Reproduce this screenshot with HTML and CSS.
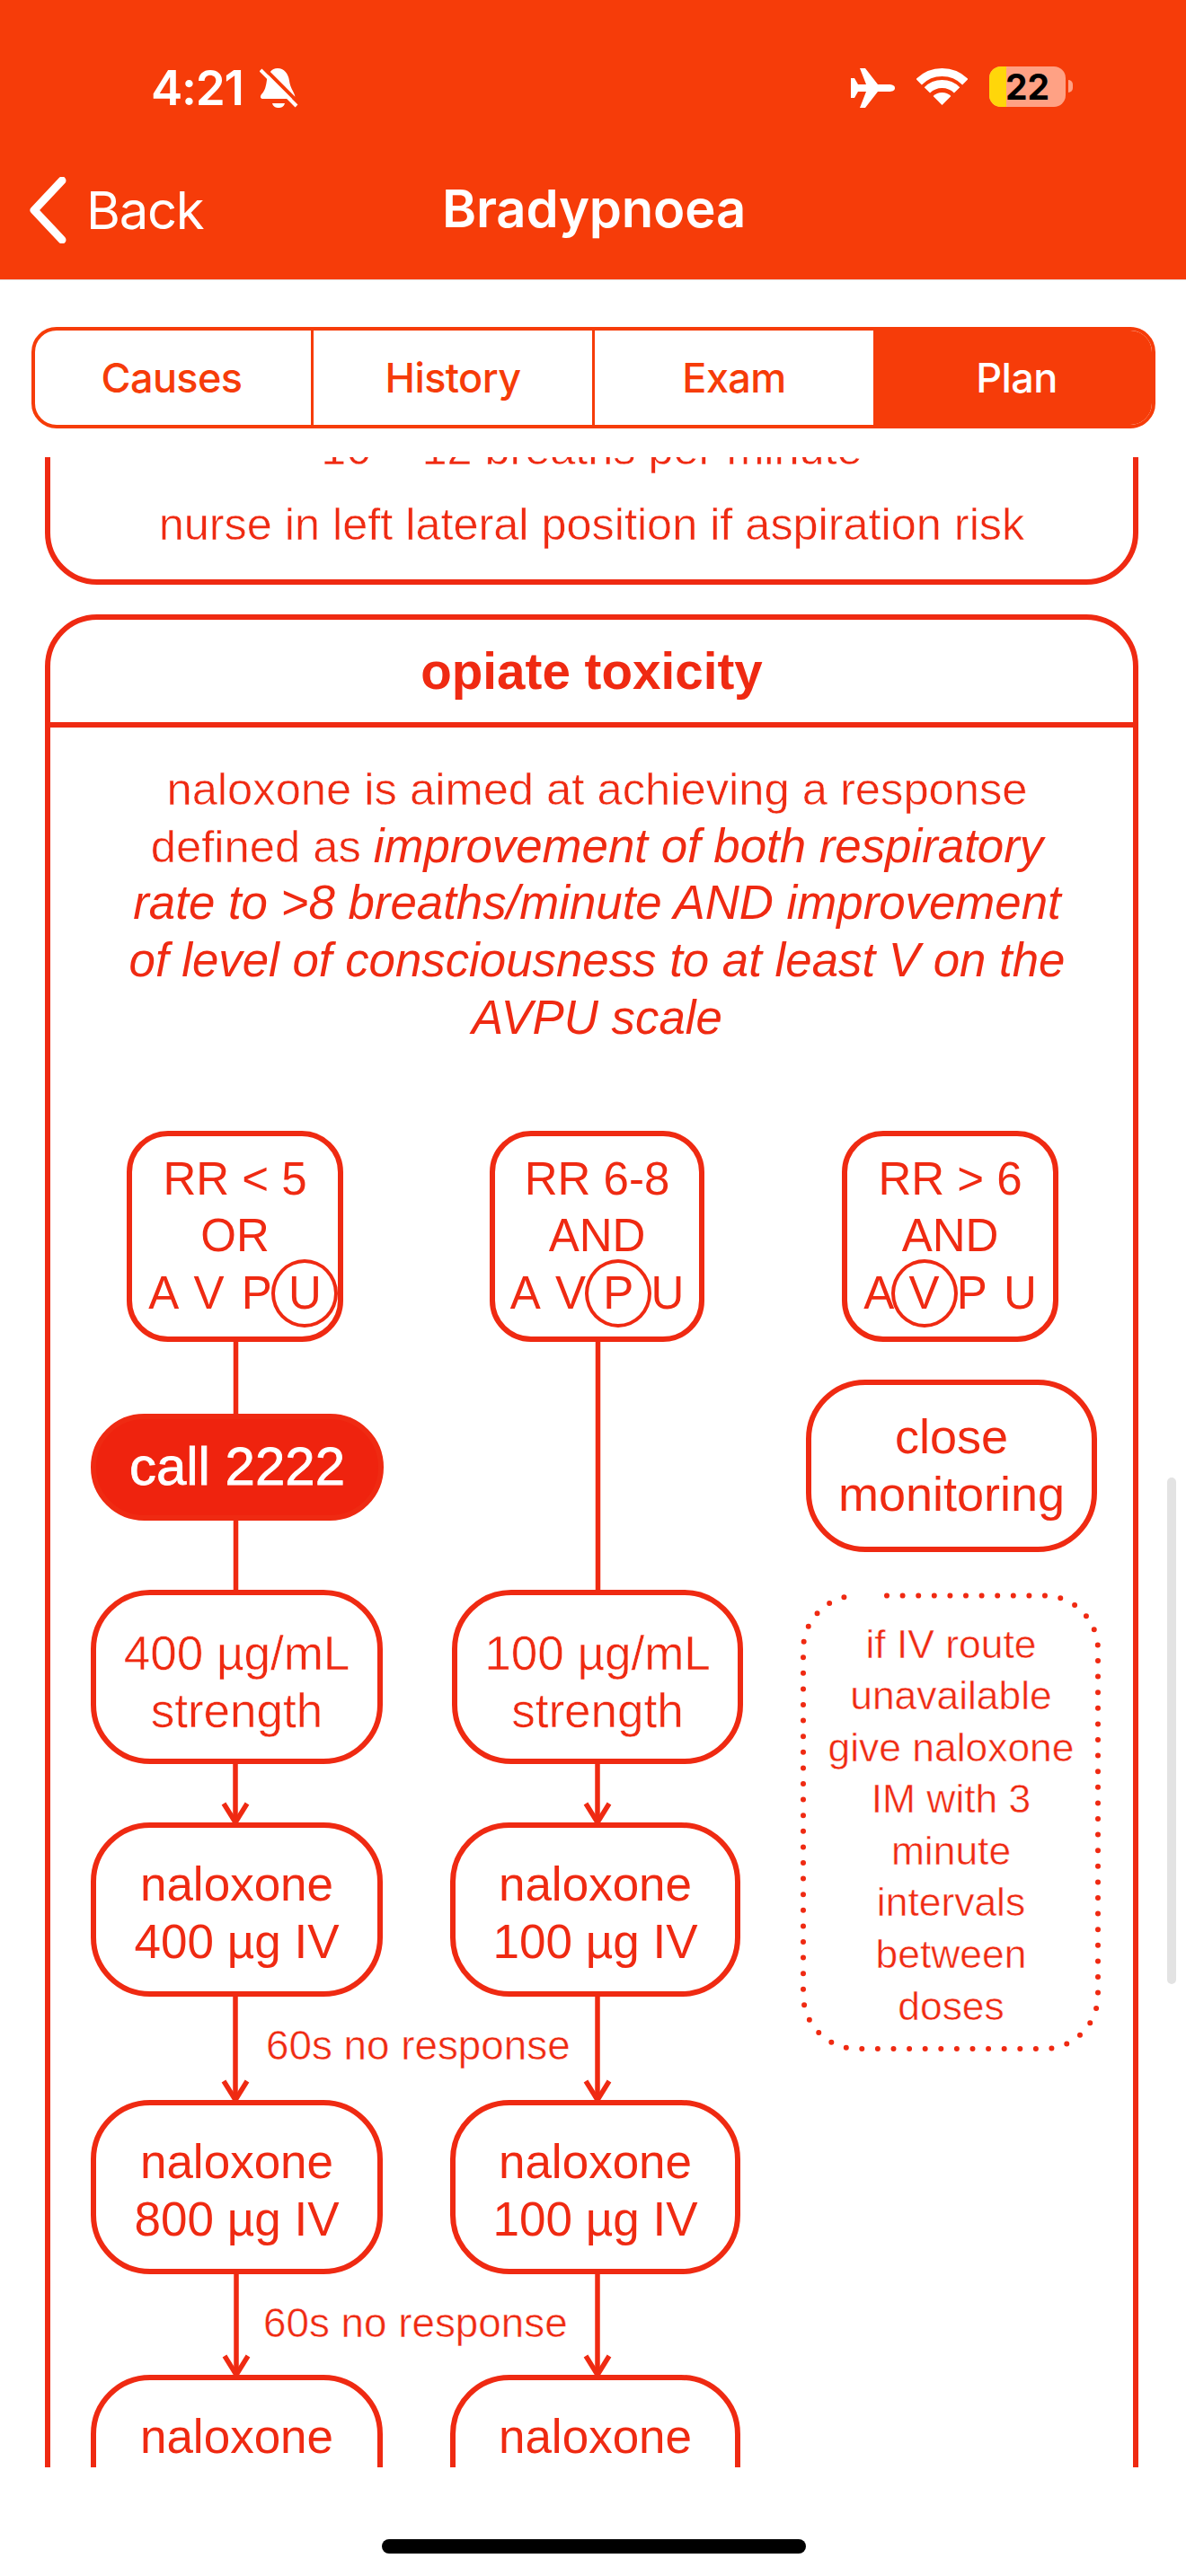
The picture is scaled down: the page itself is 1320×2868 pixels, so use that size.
FILE: index.html
```html
<!DOCTYPE html>
<html lang="en">
<head>
<meta charset="utf-8">
<title>Bradypnoea</title>
<link rel="stylesheet" href="styles.css">
</head>
<body>
<div class="app">
  <header class="header">
    <div class="status">
      <span class="time">4:21</span>
      <svg class="bell" viewBox="0 0 44 45"><path class="w" d="M20 1C27 1 32 7 33 15C34 23 38 27 39 31C40 34 38 35 36 35H4C1 35 0 33 2 30C6 26 7 21 8 14C9 7 13 1 20 1Z"/><path class="w" d="M14 40H28C27 44 24 45 21 45C18 45 15 44 14 40Z"/><path class="gap" d="M4 0L44 40"/><path class="slash" d="M1 3L41 43"/></svg>
      <span class="spacer"></span>
      <svg class="plane" viewBox="0 0 49 44"><path class="w" d="M42 18H30L16 0H10L17 18H8L4 11H0V33H4L8 26H17L10 44H16L30 26H42C46 26 49 25 49 22C49 19 46 18 42 18Z"/></svg>
      <svg class="wifi" viewBox="0 0 57 41"><path class="arc" d="M2.7 15.2A36.5 36.5 0 0 1 54.3 15.2"/><path class="arc" d="M11.9 24.4A23.5 23.5 0 0 1 45.1 24.4"/><path class="w" d="M28.5 41L18.6 31.1A14 14 0 0 1 38.4 31.1Z"/></svg>
      <span class="battery"><span class="charge"></span><span class="level">22</span></span>
      <span class="nub"></span>
    </div>
    <nav class="nav">
      <span class="back"><svg class="chev" viewBox="0 0 42 74"><path d="M37 4L6 37L37 70"/></svg>Back</span>
      <span class="title">Bradypnoea</span>
    </nav>
  </header>

  <div class="tabs">
    <span class="tab">Causes</span>
    <span class="tab">History</span>
    <span class="tab">Exam</span>
    <span class="tab active">Plan</span>
  </div>

  <main class="scroller">
    <section class="card card-prev">
      <p class="line">10 – 12 breaths per minute</p>
      <p class="line">nurse in left lateral position if aspiration risk</p>
    </section>

    <section class="card card-main">
      <h2 class="card-title">opiate toxicity</h2>
      <p class="intro"><span class="thin">naloxone is aimed at achieving a response<br>defined as </span><em>improvement of both respiratory<br>rate to &gt;8 breaths/minute AND improvement<br>of level of consciousness to at least V on the<br>AVPU scale</em></p>

      <div class="diagram">
        <svg class="wires" viewBox="0 0 1204 1700">
          <path d="M206.5 294V570"/>
          <path d="M609.5 294V570"/>
          <path d="M206 764V829M609 764V829"/>
          <path d="M206 1023V1138M609 1023V1138"/>
          <path d="M207 1332V1444M609 1332V1444"/>
          <path d="M193 808L206 829L219 808M596 808L609 829L622 808"/>
          <path d="M193 1117L206 1138L219 1117M596 1117L609 1138L622 1117"/>
          <path d="M194 1423L207 1444L220 1423M596 1423L609 1444L622 1423"/>
          <path class="dots" d="M931 576.5H1106A60 60 0 0 1 1166 636.5V1021A60 60 0 0 1 1106 1081H898A60 60 0 0 1 838 1021V636.5A60 60 0 0 1 898 576.5H899"/>
        </svg>

        <div class="node rr rr1"><span class="txt">RR &lt; 5<br>OR<br><span class="avpu">A V P <span class="ring">U</span></span></span></div>
        <div class="node rr rr2"><span class="txt">RR 6-8<br>AND<br><span class="avpu">A V <span class="ring">P</span> U</span></span></div>
        <div class="node rr rr3"><span class="txt">RR &gt; 6<br>AND<br><span class="avpu">A <span class="ring">V</span> P U</span></span></div>

        <div class="node call"><span class="txt">call 2222</span></div>
        <div class="node big close-mon"><span class="txt">close<br>monitoring</span></div>
        <div class="note thin">if IV route<br>unavailable<br>give naloxone<br>IM with 3<br>minute<br>intervals<br>between<br>doses</div>

        <div class="node big c1 r-str"><span class="txt thin">400 µg/mL<br>strength</span></div>
        <div class="node big c2s r-str"><span class="txt thin">100 µg/mL<br>strength</span></div>
        <div class="node big c1 r-a"><span class="txt">naloxone<br>400 µg IV</span></div>
        <div class="node big c2 r-a"><span class="txt">naloxone<br>100 µg IV</span></div>
        <div class="node big c1 r-b"><span class="txt">naloxone<br>800 µg IV</span></div>
        <div class="node big c2 r-b"><span class="txt">naloxone<br>100 µg IV</span></div>
        <div class="node big c1 r-c"><span class="txt">naloxone<br>&nbsp;</span></div>
        <div class="node big c2 r-c"><span class="txt">naloxone<br>&nbsp;</span></div>

        <span class="wait thin wait1">60s no response</span>
        <span class="wait thin wait2">60s no response</span>
      </div>
    </section>
  </main>

  <div class="scrollbar"></div>
  <div class="home"></div>
</div>
</body>
</html>
```

FILE: styles.css
```css
* { box-sizing: border-box; }
html, body { margin: 0; padding: 0; background: #fff; }
.app {
  position: relative;
  width: 1320px;
  height: 2868px;
  overflow: hidden;
  font-family: "Liberation Sans", Arial, sans-serif;
  color: #ef2a12;
  background: #fff;
}
/* white outline thins the glyphs to a light weight */
.thin { -webkit-text-stroke: 0.5px #fff; }

/* header */
.header {
  height: 312px;
  background: #f63c09;
  border-bottom: 1px solid #e6d9d5;
  color: #fff;
  font-family: Inter, "Liberation Sans", sans-serif;
}
.status {
  display: flex;
  align-items: flex-start;
  height: 180px;
  padding: 0 0 0 168px;
}
.time {
  margin-top: 66px;
  font-size: 53px;
  font-weight: 600;
  line-height: 64px;
  letter-spacing: -1.2px;
  width: 121px;
}
.bell { width: 44px; height: 45px; margin-top: 75px; }
.w { fill: #fff; }
.gap { stroke: #f63c09; stroke-width: 4; fill: none; }
.slash { stroke: #fff; stroke-width: 4; fill: none; }
.spacer { width: 614px; }
.plane { width: 49px; height: 44px; margin-top: 76px; }
.wifi { width: 57px; height: 41px; margin: 76px 0 0 24px; }
.arc { fill: none; stroke: #fff; stroke-width: 9; }
.battery {
  position: relative;
  display: flex;
  justify-content: center;
  width: 85px;
  height: 45px;
  margin: 74px 0 0 24px;
  border-radius: 13px;
  background: #ffa184;
  overflow: hidden;
}
.charge { position: absolute; left: 0; top: 0; bottom: 0; width: 19px; background: #ffd60a; }
.level {
  position: relative;
  color: #000;
  font-size: 39px;
  font-weight: 700;
  line-height: 45px;
}
.nub { width: 5px; height: 14px; margin: 89px 0 0 3px; border-radius: 0 6px 6px 0; background: #ffa184; }

.nav {
  position: relative;
  display: flex;
  justify-content: center;
  height: 100px;
  font-size: 58px;
  line-height: 70px;
}
.back {
  position: absolute;
  left: 32px;
  top: 17px;
  display: flex;
  align-items: center;
  gap: 22px;
  font-weight: 400;
  letter-spacing: -1.3px;
}
.chev { width: 42px; height: 74px; fill: none; stroke: #fff; stroke-width: 9; stroke-linecap: round; stroke-linejoin: round; }
.title { position: relative; left: 1px; margin-top: 17px; font-weight: 600; letter-spacing: -0.2px; }

/* tabs */
.tabs {
  display: grid;
  grid-template-columns: 310px 313px 313px 1fr;
  width: 1251px;
  height: 113px;
  margin: 52px 0 0 35px;
  border: 4px solid #f63c09;
  border-radius: 28px;
  overflow: hidden;
  font-family: Inter, "Liberation Sans", sans-serif;
  font-size: 45px;
  font-weight: 500;
  letter-spacing: -0.6px;
  color: #f63c09;
}
.tab {
  display: flex;
  align-items: center;
  justify-content: center;
  border-right: 3px solid #f63c09;
}
.tab:first-child { padding-right: 3px; }
.tab.active { border-right: 0; padding-left: 6px; background: #f63c09; color: #fff; }

/* scrolling content */
.scroller {
  height: 2238px;
  margin-top: 32px;
  padding: 0 53px 0 50px;
  overflow: hidden;
}
.card {
  border: 6px solid #ef2a12;
  background: #fff;
}
.card-prev {
  margin-top: -60px;
  padding: 3px 0 19px;
  border-radius: 0 0 58px 58px;
  text-align: center;
}
.line {
  margin: 0;
  font-size: 50.4px;
  line-height: 84px;
  white-space: nowrap;
  -webkit-text-stroke: 0.5px #fff;
}
.card-main {
  margin-top: 33px;
  border-radius: 58px 58px 0 0;
}
.card-title {
  margin: 0;
  height: 120px;
  border-bottom: 6px solid #ef2a12;
  font-size: 56.6px;
  font-weight: 700;
  line-height: 116px;
  text-align: center;
}
.intro {
  margin: 0;
  padding: 37px 38px 0 50px;
  font-size: 50.7px;
  line-height: 63.7px;
  text-align: center;
  white-space: nowrap;
}
.intro em { font-style: italic; font-size: 52.8px; line-height: 0; }

/* diagram: origin is x 56, y 1200 of the page */
.diagram {
  position: relative;
  width: 1204px;
  height: 1700px;
  margin-top: 34px;
}
.wires {
  position: absolute;
  left: 0;
  top: 0;
  width: 1204px;
  height: 1700px;
  fill: none;
  stroke: #ef2a12;
  stroke-width: 5.5;
}
.dots { stroke-width: 6; stroke-linecap: round; stroke-dasharray: 0 17.6; }
.node {
  position: absolute;
  display: flex;
  align-items: center;
  justify-content: center;
  border: 6px solid #ef2a12;
  background: #fff;
  font-size: 53px;
  line-height: 63.5px;
  text-align: center;
  white-space: nowrap;
}
.txt { position: relative; top: 4px; }
.txt.thin { top: 6px; }
.rr { top: 59px; height: 235px; border-radius: 46px; font-size: 51px; }
.rr .txt { top: 0; }
.rr1 { left: 85px; width: 241px; }
.rr2 { left: 489px; width: 239px; }
.rr3 { left: 881px; width: 241px; }
.avpu { word-spacing: 5px; }
.ring { position: relative; display: inline-block; }
.ring::before {
  content: "";
  position: absolute;
  left: 50%;
  top: 50%;
  width: 66px;
  height: 68px;
  transform: translate(-50%, -50%);
  border: 4px solid #ef2a12;
  border-radius: 50%;
}
.call {
  left: 45px;
  top: 374px;
  width: 326px;
  height: 119px;
  border-radius: 60px;
  background: #ef230e;
  color: #fff;
  font-size: 60px;
  -webkit-text-stroke: 0.8px #fff;
}
.call .txt { top: 0; }
.big { border-radius: 66px; }
.close-mon { left: 841px; top: 336px; width: 324px; height: 192px; font-size: 54px; }
.close-mon .txt { top: 0; }
.c1 { left: 45px; width: 325px; }
.c2 { left: 445px; width: 323px; }
.c2s { left: 447px; width: 324px; }
.r-str { top: 570px; height: 194px; }
.r-a { top: 829px; height: 194px; }
.r-b { top: 1138px; height: 194px; }
.r-c { top: 1444px; height: 194px; }
.note {
  position: absolute;
  left: 841px;
  top: 576px;
  width: 323px;
  height: 503px;
  padding-top: 26px;
  font-size: 44.4px;
  line-height: 57.6px;
  text-align: center;
  white-space: nowrap;
}
.wait {
  position: absolute;
  font-size: 45.8px;
  line-height: 52px;
  white-space: nowrap;
}
.wait1 { left: 240px; top: 1052px; }
.wait2 { left: 237px; top: 1361px; }

/* overlays */
.scrollbar {
  position: absolute;
  left: 1299px;
  top: 1645px;
  width: 10px;
  height: 564px;
  border-radius: 5px;
  background: #e3e3e3;
}
.home {
  position: absolute;
  left: 425px;
  top: 2827px;
  width: 472px;
  height: 16px;
  border-radius: 8px;
  background: #000;
}
```
